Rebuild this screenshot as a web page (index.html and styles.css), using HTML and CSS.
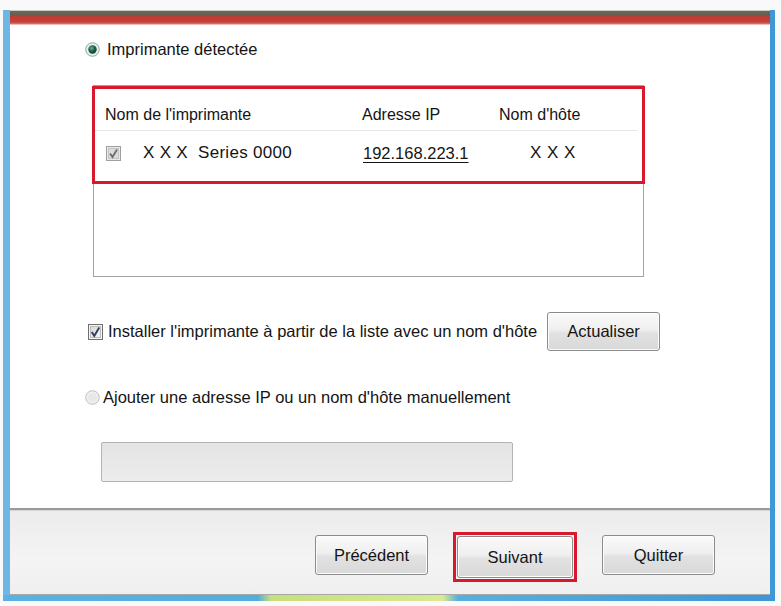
FILE: index.html
```html
<!DOCTYPE html>
<html lang="fr">
<head>
<meta charset="utf-8">
<title>Imprimante détectée</title>
<link rel="stylesheet" href="styles.css">
</head>
<body>
<div class="window">
  <div class="frame">
    <div class="titlebar"></div>
    <div class="content">
      <div class="radio-row first">
        <svg class="radio" width="15" height="15" viewBox="0 0 15 15">
          <defs>
            <radialGradient id="dot" cx="0.4" cy="0.35" r="0.7">
              <stop offset="0" stop-color="#6fb39c"/>
              <stop offset="0.5" stop-color="#1f5f4c"/>
              <stop offset="1" stop-color="#0f3a2e"/>
            </radialGradient>
          </defs>
          <circle cx="7.5" cy="7.5" r="6.8" fill="#e6eeea" stroke="#8fa9a0" stroke-width="1"/>
          <circle cx="7.5" cy="7.5" r="4.2" fill="url(#dot)"/>
        </svg>
        <span class="label">Imprimante détectée</span>
      </div>

      <div class="list">
        <div class="list-head">
          <span class="col c1">Nom de l'imprimante</span>
          <span class="col c2">Adresse IP</span>
          <span class="col c3">Nom d'hôte</span>
        </div>
        <div class="list-row">
          <span class="col c1">
            <svg class="check disabled" width="15" height="15" viewBox="0 0 15 15">
              <rect x="0.5" y="0.5" width="14" height="14" fill="#e9e9e9" stroke="#a0a0a0"/>
              <rect x="2.5" y="2.5" width="10" height="10" fill="#dcdcdc" stroke="#c4c4c4"/>
              <path d="M4 7.5 L6.5 11 L11 3.5" fill="none" stroke="#6f6f6f" stroke-width="1.9"/>
            </svg>
            <span class="printer">X X X&nbsp;&nbsp;Series 0000</span>
          </span>
          <span class="col c2"><span class="ip">192.168.223.1</span></span>
          <span class="col c3"><span class="host">X X X</span></span>
        </div>
        <div class="highlight"></div>
      </div>

      <div class="check-row">
        <svg class="check" width="15" height="16" viewBox="0 0 15 16">
          <defs>
            <linearGradient id="cb" x1="0" y1="0" x2="1" y2="1">
              <stop offset="0" stop-color="#d6d6d6"/>
              <stop offset="1" stop-color="#f7f7f7"/>
            </linearGradient>
          </defs>
          <rect x="0.5" y="0.5" width="14" height="15" fill="#f4f4f4" stroke="#6f6f6f"/>
          <rect x="2.5" y="2.5" width="10" height="11" fill="url(#cb)" stroke="#bdbdbd"/>
          <path d="M3.8 8 L6.3 12 L11.2 3.5" fill="none" stroke="#2f3d5c" stroke-width="1.9"/>
        </svg>
        <span class="label">Installer l'imprimante à partir de la liste avec un nom d'hôte</span>
        <button class="btn refresh">Actualiser</button>
      </div>

      <div class="radio-row second">
        <svg class="radio" width="15" height="15" viewBox="0 0 15 15">
          <circle cx="7.5" cy="7.5" r="6.8" fill="#f0f0f0" stroke="#bdbdbd" stroke-width="1"/>
          <circle cx="7.5" cy="7.5" r="4.5" fill="#e8e8e8"/>
        </svg>
        <span class="label">Ajouter une adresse IP ou un nom d'hôte manuellement</span>
      </div>

      <div class="input"></div>
    </div>

    <div class="footer">
      <button class="btn">Précédent</button>
      <span class="focus-ring"><button class="btn next">Suivant</button></span>
      <button class="btn">Quitter</button>
    </div>
  </div>
  <div class="bottom-edge"></div>
</div>
</body>
</html>
```

FILE: styles.css
```css
html, body {
  margin: 0;
  padding: 0;
  background: #f9f9f9;
}

body {
  font-family: "Liberation Sans", Arial, sans-serif;
  font-size: 16.5px;
  color: #141414;
}

.window {
  margin: 10px 0 0 3px;
  width: 772px;
}

.frame {
  border-left: 7px solid #6db7e4;
  border-right: 5px solid #3f97d6;
  background: #ffffff;
}

.titlebar {
  height: 15px;
  background: linear-gradient(to bottom,
    #c9c9c9 0px, #c9c9c9 1px,
    #6b6856 1px, #645f4e 5px,
    #a8463a 6px, #c43b33 8px,
    #c6423a 12px, #dc7a74 14px, #ffffff 15px);
}

.content {
  height: 483px;
  box-sizing: border-box;
  padding: 12px 0 0 75px;
  display: flex;
  flex-direction: column;
  align-items: flex-start;
}

.radio-row {
  height: 24px;
  display: flex;
  align-items: center;
}

.radio-row.first {
  gap: 7px;
}

.radio-row.second {
  margin-top: 34px;
  gap: 3px;
}

.radio {
  display: block;
  flex: none;
}

.list {
  position: relative;
  margin: 24px 0 0 8px;
  width: 551px;
  height: 192px;
  box-sizing: border-box;
  border: 1px solid #a3a3a3;
  background: #ffffff;
}

.list-head,
.list-row {
  display: flex;
  align-items: center;
  padding-left: 11px;
}

.list-head {
  margin-top: 14px;
  height: 30px;
  font-size: 16px;
  border-bottom: 1px solid #e6e6e6;
  margin-right: 6px;
}

.list-row {
  margin-top: 9px;
  height: 26px;
}

.col.c1 {
  width: 257px;
  display: flex;
  align-items: center;
}

.col.c2 {
  width: 137px;
}

.col.c3 {
  flex: 1;
}

.list-row .c2 {
  padding-left: 1px;
  box-sizing: border-box;
}

.check.disabled {
  margin-left: 1px;
}

.check {
  display: block;
  flex: none;
}

.printer {
  margin-left: 22px;
  font-size: 17px;
  letter-spacing: 0.3px;
}

.ip {
  text-decoration: underline;
  text-underline-offset: 3px;
}

.host {
  margin-left: 31px;
  font-size: 17px;
  letter-spacing: 0.5px;
}

.highlight {
  position: absolute;
  left: -2px;
  top: 0;
  width: 553px;
  height: 98px;
  box-sizing: border-box;
  border: 3px solid #d8182c;
}

.check-row {
  margin: 35px 0 0 3px;
  height: 39px;
  display: flex;
  align-items: center;
}

.check-row .label {
  margin-left: 5px;
}

.btn {
  font-family: "Liberation Sans", Arial, sans-serif;
  font-size: 16.5px;
  color: #141414;
  width: 113px;
  height: 40px;
  padding: 0;
  border: 1px solid #8b8b8b;
  border-radius: 3px;
  background: linear-gradient(to bottom, #fafafa 0%, #efefef 45%, #e1e1e1 55%, #d9d9d9 100%);
  box-shadow: inset 0 0 0 1px #fcfcfc;
}

.btn.refresh {
  margin-left: 10px;
  height: 39px;
}

.input {
  margin: 33px 0 0 16px;
  width: 412px;
  height: 40px;
  box-sizing: border-box;
  border: 1px solid #b3b3b3;
  border-radius: 2px;
  background: linear-gradient(to bottom, #e4e4e4, #ececec);
}

.footer {
  height: 87px;
  box-sizing: border-box;
  border-top: 2px solid #9a9a9a;
  box-shadow: inset 0 1px 0 #d6d6d6;
  background: linear-gradient(to bottom, #ececec, #f4f4f4 60%, #efefef);
  display: flex;
  justify-content: flex-end;
  align-items: flex-start;
  gap: 25px;
  padding: 25px 55px 0 0;
  border-bottom: 1px solid #a8a8a8;
}

.focus-ring {
  display: block;
  margin-top: -3px;
  padding: 1px;
  border: 3px solid #d8182c;
  background: #f4f4f4;
}

.btn.next {
  display: block;
  width: 116px;
  height: 42px;
}

.bottom-edge {
  height: 6px;
  background: linear-gradient(to right,
    #5ab1e2 0px, #54addf 255px,
    #c7df7c 268px, #d9ea92 440px,
    #57afe0 455px, #3d96d6 100%);
}
```
